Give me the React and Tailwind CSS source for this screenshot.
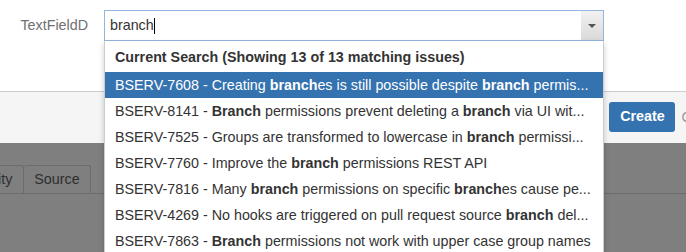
import React from 'react';

const issues = [
  { key: 'BSERV-7608', parts: ['Creating ', ['branch'], 'es is still possible despite ', ['branch'], ' permis...'], active: true },
  { key: 'BSERV-8141', parts: [['Branch'], ' permissions prevent deleting a ', ['branch'], ' via UI wit...'] },
  { key: 'BSERV-7525', parts: ['Groups are transformed to lowercase in ', ['branch'], ' permissi...'] },
  { key: 'BSERV-7760', parts: ['Improve the ', ['branch'], ' permissions REST API'] },
  { key: 'BSERV-7816', parts: ['Many ', ['branch'], ' permissions on specific ', ['branch'], 'es cause pe...'] },
  { key: 'BSERV-4269', parts: ['No hooks are triggered on pull request source ', ['branch'], ' del...'] },
  { key: 'BSERV-7863', parts: [['Branch'], ' permissions not work with upper case group names'] },
];

function IssueRow({ issue }) {
  return (
    <div
      className={`h-[26px] pl-[10px] pr-[2px] leading-[26px] whitespace-nowrap overflow-hidden ${
        issue.active ? 'bg-[#3572b0] text-white' : 'text-[#333333]'
      }`}
    >
      {issue.key} -{' '}
      {issue.parts.map((p, i) =>
        Array.isArray(p) ? (
          <b key={i} className="font-bold">{p[0]}</b>
        ) : (
          <span key={i}>{p}</span>
        )
      )}
    </div>
  );
}

export default function App() {
  return (
    <div
      className="relative w-[686px] h-[252px] overflow-hidden flex flex-col text-[14.3px]"
      style={{ fontFamily: '"Liberation Sans", Arial, sans-serif' }}
    >
      {/* Dialog body */}
      <div className="h-[92px] bg-white border-b border-[#cccccc] flex items-start pt-[10px] shrink-0">
        <label className="w-[88px] text-right text-[#707070] leading-[31px]">TextFieldD</label>
        <div className="ml-[16px] w-[500px] h-[31px] border border-[#93b5de] flex items-stretch bg-white">
          <div className="flex-1 pl-[5px] leading-[29px] text-[#333333] flex items-center">
            <span>branch</span>
            <span className="w-px h-[16px] bg-black" />
          </div>
          <div className="w-[22px] bg-gradient-to-b from-[#f2f2f2] to-[#d9d9d9] flex items-center justify-center">
            <div className="w-0 h-0 border-l-[4px] border-r-[4px] border-t-[4px] border-l-transparent border-r-transparent border-t-[#555555]" />
          </div>
        </div>
      </div>

      {/* Dialog footer */}
      <div className="h-[51px] bg-[#f5f5f5] shrink-0 flex justify-end items-start pt-[10px] mr-[-40px]">
        <button className="w-[66px] h-[30px] rounded-[3px] bg-[#3572b0] text-white font-bold">Create</button>
        <span className="ml-[6px] leading-[30px] text-[#999999]">Cancel</span>
      </div>

      {/* Dimmed page */}
      <div className="flex-1 bg-[#7f7f7f] pt-[22px]">
        <div className="flex border-b border-[#6c6c6c] ml-[-45px] h-[29px]">
          <div className="px-[11px] border border-b-0 border-[#6c6c6c] rounded-t-[3px] leading-[27px] text-[#2e2e2e]">Activity</div>
          <div className="px-[10px] border border-b-0 border-l-0 border-[#6c6c6c] rounded-t-[3px] leading-[27px] text-[#2e2e2e]">Source</div>
        </div>
      </div>

      {/* Suggestions dropdown */}
      <div className="absolute left-[104px] top-[41px] w-[500px] bg-white border border-t-0 border-[#cccccc] shadow-[0_3px_6px_rgba(0,0,0,0.2)]">
        <div className="h-[31px] px-[10px] leading-[32px] font-bold text-[#333333] whitespace-nowrap">
          Current Search (Showing 13 of 13 matching issues)
        </div>
        {issues.map((issue) => (
          <IssueRow key={issue.key} issue={issue} />
        ))}
      </div>
    </div>
  );
}
